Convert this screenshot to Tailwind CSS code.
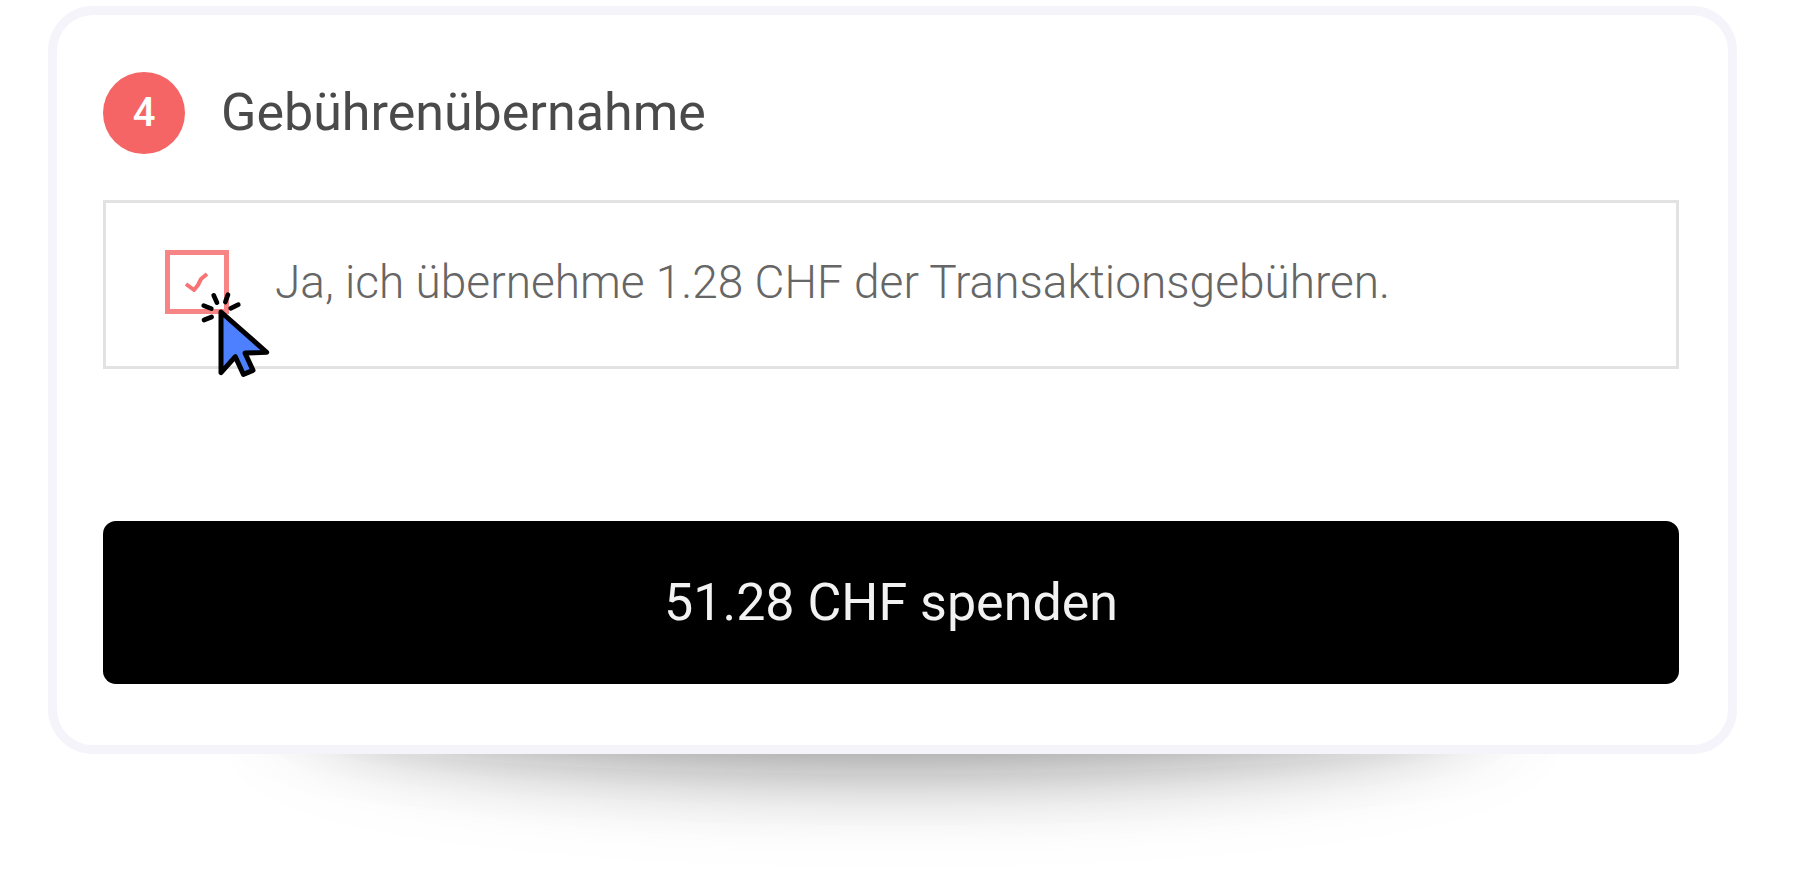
<!DOCTYPE html>
<html lang="de">

<head>
    <meta charset="UTF-8">
    <meta name="viewport" content="width=device-width, initial-scale=1.0">
    <title>Gebührenübernahme</title>
    <script src="https://cdn.jsdelivr.net/npm/@tailwindcss/browser@4"></script>
</head>

<body class="bg-white font-['Roboto',sans-serif]">
    <main class="pt-1.5 pl-12 pr-[63px]">
        <form class="relative z-10 bg-white border-9 border-[#f5f4fa] rounded-[45px] pt-[57px] pb-[61px] pl-[46px] pr-[49px]">
            <div class="flex items-center gap-9">
                <span class="flex items-center justify-center size-[82px] rounded-full bg-[#f56565] text-white text-[40px] font-medium">4</span>
                <h1 class="text-[52px] leading-[60px] text-[#4a4a4a]">Gebührenübernahme</h1>
            </div>

            <div class="mt-[46px] border-3 border-[#e2e2e2] pt-[47px] pb-[52px] pl-[59px] pr-6 flex items-center gap-[46px]">
                <div class="relative size-16 shrink-0">
                    <input id="fees" type="checkbox" checked
                        class="block appearance-none size-16 border-5 border-[#f88585] bg-white">
                    <svg class="absolute left-5 top-5 w-6 h-6 pointer-events-none" viewBox="0 0 24 24" fill="none"
                        stroke="#f87474" stroke-width="4">
                        <path d="M1 14L5 17L9 20L13 15L16 9L22 4" stroke-linejoin="round" />
                    </svg>
                    <!-- click pointer -->
                    <svg class="absolute left-[35px] top-10 w-[70px] h-[88px] max-w-none pointer-events-none"
                        viewBox="180 180 210 264" fill="none" stroke="#000" stroke-linecap="round" stroke-linejoin="round">
                        <path fill="#4d80ff" stroke-width="15"
                            d="M243 246L380 367L315 369L339 421L310 433L286 380L243 428Z" />
                        <path stroke-width="14"
                            d="M221 196L231 218M264 194L256 216M272 235L295 224M214 236L191 227M215 261L192 270" />
                    </svg>
                </div>
                <label for="fees" class="text-[46px] leading-[64px] font-light text-[#666]">Ja, ich übernehme 1.28 CHF der Transaktionsgebühren.</label>
            </div>

            <button type="submit"
                class="mt-[152px] block w-full h-[163px] rounded-[13px] bg-black text-[#f2f2f2] text-[52px] leading-[60px]">51.28 CHF spenden</button>
        </form>

        <!-- curved shadow under the card -->
        <div class="relative overflow-hidden h-[116px] ml-[182px] mr-[182px]">
            <div class="absolute inset-x-0 -top-[100px] h-[120px] rounded-[50%] shadow-[0_0_90px_rgba(0,0,0,0.03)]"></div>
            <div class="absolute inset-x-[80px] -top-[150px] h-[150px] rounded-[50%] shadow-[0_0_95px_rgba(0,0,0,0.57)]"></div>
        </div>
    </main>
</body>

</html>
